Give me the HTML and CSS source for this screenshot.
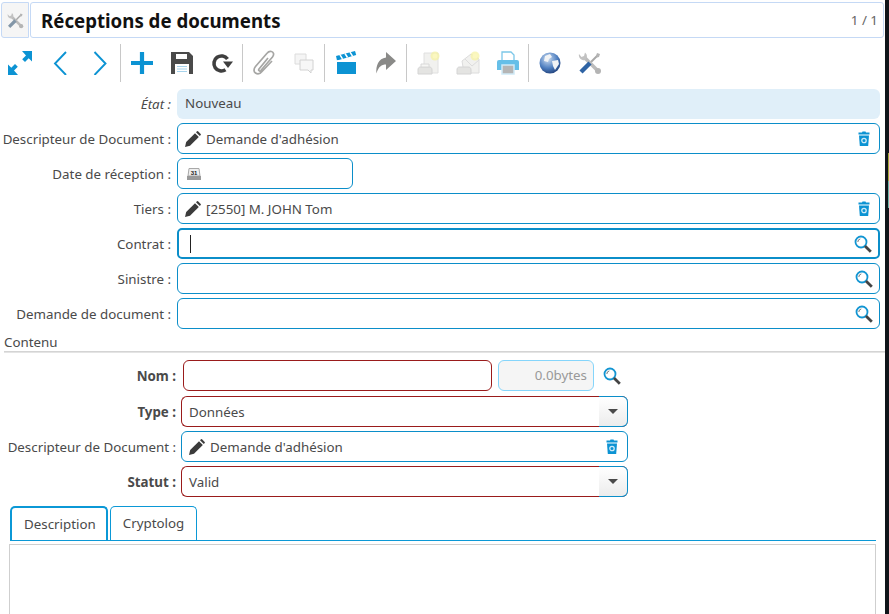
FILE: index.html
```html
<!DOCTYPE html>
<html lang="fr">
<head>
    <meta charset="UTF-8">
    <title>Réceptions de documents</title>
    <link rel="stylesheet" href="styles.css">
</head>
<body>
    <svg class="defs" width="0" height="0">
        <defs>
            <symbol id="pencil" viewBox="0 0 16 16">
                <path d="M0 16l1.200-5L10 2.200 13.800 6 5 14.800z" fill="#3b3b3b"/>
                <path d="M11 1.200L12 .3q.5-.4 1 0l2.700 2.700q.4.500 0 1L14.800 5z" fill="#3b3b3b"/>
            </symbol>
            <symbol id="trash" viewBox="0 0 12 16">
                <path d="M4 1.500L4.500 .5h3l.5 1h3.500v2H.5v-2z" fill="#0c93d3"/>
                <path d="M1 4.500h10l-.8 10.500H1.800z" fill="#0c93d3"/>
                <circle cx="6" cy="9.500" r="2.200" fill="none" stroke="#cfeaf7" stroke-width="1.300"/>
            </symbol>
            <symbol id="search" viewBox="0 0 18 18">
                <circle cx="7" cy="7" r="5.500" fill="#fff" stroke="#1295d2" stroke-width="1.800"/>
                <path d="M3.800 7a3.200 3.200 0 0 1 2.500-3.100" fill="none" stroke="#777" stroke-width="1"/>
                <path d="M11 11l5.800 5.800" stroke="#444" stroke-width="2.800"/>
            </symbol>
            <symbol id="tools" viewBox="0 0 24 24">
                <path d="M11 13l9-9" stroke="#a8a8a8" stroke-width="2"/>
                <path d="M19 2l3 1-1 3-2 .5-1-1.500z" fill="#b4b4b4"/>
                <path d="M6 6l13 13" stroke="#bcbcbc" stroke-width="3.600"/>
                <path d="M8 8a5 5 0 0 0-1-6.500L6 5 3.500 6 1 3a5 5 0 0 0 6 6z" fill="#c2c2c2"/>
                <circle cx="20" cy="20" r="3" fill="#b4b4b4"/>
            </symbol>
        </defs>
    </svg>

    <header class="title-bar">
        <div class="title-icon">
            <svg width="17" height="17" viewBox="0 0 24 24">
                <use href="#tools"/>
                <path d="M3 21l9-9" stroke="#8296a8" stroke-width="4.500"/>
            </svg>
        </div>
        <div class="title-box">
            <h1>Réceptions de documents</h1>
            <span class="counter">1 / 1</span>
        </div>
    </header>

    <nav class="toolbar">
        <div class="tool-group first">
            <span class="tool">
                <svg width="24" height="24" viewBox="0 0 24 24">
                    <path d="M14 0h10v10.500l-3.300-3.200-3.700 3.700-2.800-2.800L18 4.500z" fill="#0c93d3"/>
                    <path d="M10 24H0V13.500l3.300 3.200L7 13l2.800 2.800L6 19.500z" fill="#0c93d3"/>
                </svg>
            </span>
            <span class="tool">
                <svg width="24" height="24" viewBox="0 0 24 24"><path d="M18 1L7 12.500 18 24" fill="none" stroke="#0c93d3" stroke-width="1.900"/></svg>
            </span>
            <span class="tool">
                <svg width="24" height="24" viewBox="0 0 24 24"><path d="M6.500 1l11 11.500L6.500 24" fill="none" stroke="#0c93d3" stroke-width="1.900"/></svg>
            </span>
        </div>
        <div class="tool-group">
            <span class="tool">
                <svg width="24" height="24" viewBox="0 0 24 24"><path d="M12 1v22M1 12h22" stroke="#0c93d3" stroke-width="4.200"/></svg>
            </span>
            <span class="tool">
                <svg width="24" height="24" viewBox="0 0 24 24">
                    <path d="M1 1h18l4 4v18H1z" fill="#4a4a4a"/>
                    <path d="M6 3h11v5H6z" fill="#fff"/>
                    <path d="M5 13h14v10H5z" fill="#fff"/>
                    <path d="M7 15.500h10M7 18h10M7 20.500h10" stroke="#a6d3ec"/>
                </svg>
            </span>
            <span class="tool">
                <svg width="24" height="24" viewBox="0 0 24 24">
                    <path d="M15.500 18.800A7.500 7.500 0 1 1 17.500 8" fill="none" stroke="#3f3f3f" stroke-width="3.600"/>
                    <path d="M13 10.500h10L18 17z" fill="#3f3f3f"/>
                </svg>
            </span>
        </div>
        <div class="tool-group">
            <span class="tool">
                <svg width="24" height="26" viewBox="0 0 24 26">
                    <path d="M16 8L7 19c-1 1.300.6 2.800 1.800 1.500L20.500 7c2-2.400 1-5-1-5.500-1.700-.5-3.300.2-4.500 1.700L3.500 16.500c-2 2.500-2 5 0 6.500s4.500 1 6.500-1.500L20 11" fill="none" stroke="#a6a6a4" stroke-width="1.700"/>
                </svg>
            </span>
            <span class="tool">
                <svg width="20" height="21" viewBox="0 0 20 21">
                    <path d="M1 1h11v10H1z" fill="#f5f5f5" stroke="#dcdcdc"/>
                    <path d="M6 7h13v10h-2v3l-3-3H6z" fill="#f7f7f7" stroke="#d2d2d2"/>
                </svg>
            </span>
        </div>
        <div class="tool-group">
            <span class="tool">
                <svg width="22" height="24" viewBox="0 0 22 24">
                    <path d="M2 11h19v12H2z" fill="#0c93d3"/>
                    <path d="M1 5L20 0l1.200 4L2 9.500z" fill="#0c93d3"/>
                    <path d="M5 3.800l2.500 4M10 2.500l2.500 4M15 1.200l2.500 4M2 10h19" stroke="#fff" stroke-width="1.500"/>
                </svg>
            </span>
            <span class="tool">
                <svg width="22" height="24" viewBox="0 0 22 24">
                    <path d="M11 1l10 9-10 9v-5.500c-4.500 0-7.500 2-9.500 9C.5 15 3.500 7.500 11 6.500z" fill="#8a8a88"/>
                </svg>
            </span>
        </div>
        <div class="tool-group">
            <span class="tool">
                <svg width="24" height="24" viewBox="0 0 24 24">
                    <path d="M8 2h14v20H8z" fill="#f1f1ef" stroke="#e0e0e0"/>
                    <path d="M2 19c0-3 2-3 3-3h8c2 0 3 1 3 3v4H2z" fill="#e4e4e2" stroke="#d4d4d4"/>
                    <path d="M5 13h8v3H5z" fill="#f6f6f4" stroke="#d8d8d8"/>
                    <circle cx="19" cy="5" r="4.500" fill="#f7f2a0" opacity=".7"/>
                    <circle cx="19" cy="5" r="2.500" fill="#fbf7c0"/>
                </svg>
            </span>
            <span class="tool">
                <svg width="24" height="24" viewBox="0 0 24 24">
                    <path d="M6 10l9-7 8 5v14H8z" fill="#f1f1ef" stroke="#dcdcdc"/>
                    <path d="M9 8l7 7 7-6" fill="none" stroke="#dcdcdc"/>
                    <path d="M1 19c0-3 2-3 3-3h8c2 0 3 1 3 3v4H1z" fill="#e4e4e2" stroke="#d4d4d4"/>
                    <circle cx="19" cy="5" r="4.500" fill="#f7f2a0" opacity=".7"/>
                    <circle cx="19" cy="5" r="2.500" fill="#fbf7c0"/>
                </svg>
            </span>
            <span class="tool">
                <svg width="22" height="24" viewBox="0 0 22 24">
                    <path d="M5 1h9l3 3v6H5z" fill="#fff" stroke="#7cc7e8" stroke-width="1.300"/>
                    <path d="M2 9h18q2 0 2 2v8H0v-8q0-2 2-2z" fill="#66bfe8"/>
                    <path d="M5 14h12v9H5z" fill="#b5b5b5" stroke="#cfeaf7" stroke-width="1.500"/>
                </svg>
            </span>
        </div>
        <div class="tool-group last">
            <span class="tool">
                <svg width="24" height="24" viewBox="0 0 24 24">
                    <defs>
                        <radialGradient id="globe" cx="40%" cy="30%" r="75%">
                            <stop offset="0" stop-color="#cfdff2"/>
                            <stop offset=".6" stop-color="#4f7fc0"/>
                            <stop offset="1" stop-color="#1f3f78"/>
                        </radialGradient>
                    </defs>
                    <circle cx="12" cy="12" r="10.500" fill="url(#globe)"/>
                    <path d="M7 5l5-2 2 3-3 2-1 3-4-1zM14 10l6-1 1 4-4 6-2-4z" fill="#f1f3f5"/>
                </svg>
            </span>
            <span class="tool">
                <svg width="24" height="24" viewBox="0 0 24 24">
                    <use href="#tools"/>
                    <path d="M3 21l9-9" stroke="#2e63a4" stroke-width="4.500"/>
                </svg>
            </span>
        </div>
    </nav>

    <main>
        <section class="form-main">
            <label class="field-label etat">État :</label>
            <div class="field readonly">Nouveau</div>

            <label class="field-label">Descripteur de Document :</label>
            <div class="field">
                <svg class="pencil" width="16" height="16"><use href="#pencil"/></svg>
                <span class="field-text">Demande d'adhésion</span>
                <svg class="end-icon" width="12" height="16"><use href="#trash"/></svg>
            </div>

            <label class="field-label">Date de réception :</label>
            <div class="field date">
                <svg width="14" height="12" viewBox="0 0 14 12">
                    <path d="M2 .5h10L13 8H1z" fill="#efefef" stroke="#a8a8a8"/>
                    <path d="M0 8h14v4H0z" fill="#9a9a9a"/>
                    <text x="7" y="7" class="cal-day">31</text>
                </svg>
            </div>

            <label class="field-label">Tiers :</label>
            <div class="field">
                <svg class="pencil" width="16" height="16"><use href="#pencil"/></svg>
                <span class="field-text">[2550] M. JOHN Tom</span>
                <svg class="end-icon" width="12" height="16"><use href="#trash"/></svg>
            </div>

            <label class="field-label">Contrat :</label>
            <div class="field focused">
                <span class="caret"></span>
                <svg class="end-icon search" width="18" height="18"><use href="#search"/></svg>
            </div>

            <label class="field-label">Sinistre :</label>
            <div class="field">
                <svg class="end-icon search" width="18" height="18"><use href="#search"/></svg>
            </div>

            <label class="field-label">Demande de document :</label>
            <div class="field">
                <svg class="end-icon search" width="18" height="18"><use href="#search"/></svg>
            </div>
        </section>

        <div class="section-title">Contenu</div>

        <section class="form-content">
            <label class="field-label strong">Nom :</label>
            <div class="name-row">
                <div class="field required name-input"></div>
                <div class="size-box">0.0bytes</div>
                <svg width="18" height="18"><use href="#search"/></svg>
            </div>

            <label class="field-label strong">Type :</label>
            <div class="field required select">
                <span class="field-text">Données</span>
                <span class="select-btn"><i class="arrow"></i></span>
            </div>

            <label class="field-label">Descripteur de Document :</label>
            <div class="field wide">
                <svg class="pencil" width="16" height="16"><use href="#pencil"/></svg>
                <span class="field-text">Demande d'adhésion</span>
                <svg class="end-icon" width="12" height="16"><use href="#trash"/></svg>
            </div>

            <label class="field-label strong">Statut :</label>
            <div class="field required select">
                <span class="field-text">Valid</span>
                <span class="select-btn"><i class="arrow"></i></span>
            </div>
        </section>

        <div class="tabs">
            <span class="tab active">Description</span>
            <span class="tab">Cryptolog</span>
        </div>
        <div class="tab-panel"></div>
    </main>

    <div class="edge"><div class="edge-mark"></div></div>
</body>
</html>
```

FILE: styles.css
```css
html, body {
    height: 100%;
}
body {
    margin: 0;
    height: 614px;
    overflow: hidden;
    background: #fff;
    font-family: "Noto Sans", "Open Sans", sans-serif;
    font-size: 13.33px;
    color: #4a4a4a;
}
.defs {
    position: absolute;
}

/* title */
.title-bar {
    display: flex;
    gap: 1px;
    height: 36px;
    margin: 2px 5px 0 1px;
}
.title-icon {
    width: 28px;
    display: flex;
    align-items: center;
    justify-content: center;
    border: 1px solid #c5d9f5;
    border-radius: 3px 0 0 3px;
    box-sizing: border-box;
    background: #f5f5f5;
}
.title-box {
    flex: 1;
    display: flex;
    align-items: center;
    justify-content: space-between;
    padding: 0 5px 0 10px;
    border: 1px solid #c5d9f5;
    border-radius: 3px;
}
h1 {
    margin: 0;
    font-size: 18.67px;
    font-weight: 700;
    color: #111;
}
.counter {
    color: #666;
    font-size: 13.33px;
}

/* toolbar */
.toolbar {
    display: flex;
    height: 38px;
    margin-top: 6px;
}
.tool-group {
    display: flex;
    align-items: center;
    gap: 16px;
    padding: 0 8px 0 9px;
    border-right: 1px solid #c8c8c8;
}
.tool-group.first {
    padding-left: 8px;
}
.tool-group.last {
    border-right: none;
}
.tool {
    width: 24px;
    display: flex;
    justify-content: center;
}

/* forms */
.form-main,
.form-content {
    display: grid;
    align-items: center;
    row-gap: 4px;
}
.form-main {
    grid-template-columns: 171px 703px;
    column-gap: 6px;
    margin-top: 7px;
}
.form-content {
    grid-template-columns: 176px 447px;
    column-gap: 5px;
    margin-top: 7px;
}
.field-label {
    text-align: right;
    white-space: nowrap;
}
.field-label.etat {
    font-style: italic;
}
.field-label.strong {
    font-weight: 700;
}
.field {
    display: flex;
    align-items: center;
    height: 31px;
    box-sizing: border-box;
    padding: 0 9px 0 7px;
    border: 1px solid #0b8ec9;
    border-radius: 6px;
    background: #fff;
}
.field.readonly {
    height: 30px;
    border: none;
    padding: 0 8px 2px;
    background: #e0eff9;
}
.field.date {
    width: 176px;
    padding-left: 9px;
}
.cal-day {
    font-family: "Liberation Sans", sans-serif;
    font-size: 6px;
    font-weight: 700;
    fill: #222;
    text-anchor: middle;
}
.field.focused {
    border-width: 2px;
    border-radius: 5px;
    padding-left: 11px;
}
.caret {
    width: 1px;
    height: 18px;
    background: #222;
}
.pencil {
    margin-right: 5px;
    flex-shrink: 0;
}
.field-text {
    white-space: nowrap;
}
.end-icon {
    margin-left: auto;
}
.end-icon.search {
    margin-right: -3px;
}
.section-title {
    margin: 4px 4px 0 4px;
    line-height: 18px;
}
.section-title::after {
    content: "";
    display: block;
    border-top: 1px solid #d4d4d4;
    border-bottom: 1px solid #e4e4e4;
}
.name-row {
    display: flex;
    align-items: center;
    gap: 6px;
    margin: 0 0 1px 2px;
}
.name-input {
    width: 309px;
}
.required {
    border-color: #9a1b1b;
}
.size-box {
    width: 96px;
    height: 31px;
    box-sizing: border-box;
    padding-right: 6px;
    line-height: 29px;
    text-align: right;
    color: #999;
    background: #f5f5f5;
    border: 1px solid #85d5fb;
    border-radius: 6px;
}
.name-row svg {
    margin-left: 3px;
}
.select {
    position: relative;
    border-right: none;
}
.select-btn {
    position: absolute;
    top: -1px;
    right: 0;
    bottom: -1px;
    width: 28px;
    display: flex;
    align-items: center;
    justify-content: center;
    border: 1px solid #0b8ec9;
    border-left: none;
    border-radius: 0 6px 6px 0;
    background: linear-gradient(#fff, #ececec);
}
.arrow {
    border-top: 5px solid #4a4a4a;
    border-left: 5px solid transparent;
    border-right: 5px solid transparent;
}

/* tabs */
.tabs {
    display: flex;
    gap: 2px;
    height: 34px;
    margin: 9px 13px 0 10px;
    border-bottom: 1px solid #0b98d6;
}
.tab {
    height: 34px;
    box-sizing: border-box;
    padding: 0 12px;
    line-height: 33px;
    border: 1px solid #0b98d6;
    border-bottom: none;
    border-radius: 5px 5px 0 0;
}
.tab.active {
    padding: 0 10px 0 12px;
    border-width: 2px 2px 0 2px;
    line-height: 32px;
}
.tab-panel {
    height: 80px;
    margin: 3px 13px 0 9px;
    border: 1px solid #cfcfcf;
}

/* dark strip at the window edge */
.edge {
    position: absolute;
    top: 0;
    right: 0;
    width: 4px;
    height: 614px;
    background: #10141a;
}
.edge-mark {
    position: absolute;
    top: 153px;
    right: 0;
    width: 1px;
    height: 55px;
    background: linear-gradient(#a3a83a 50%, #6fb5a8 50%);
}
```
